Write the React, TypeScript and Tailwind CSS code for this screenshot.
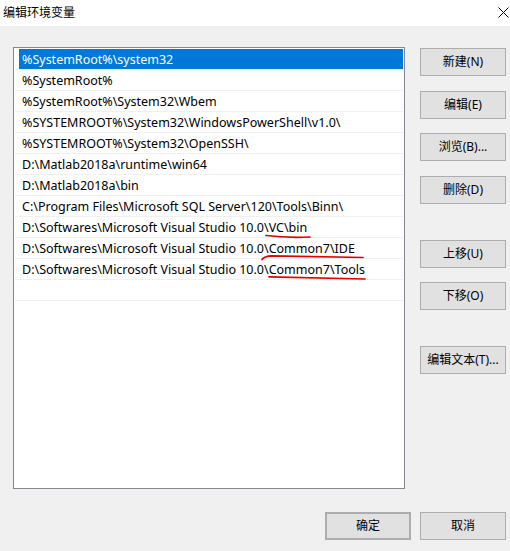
import React from 'react';

const paths = [
    '%SystemRoot%\\system32',
    '%SystemRoot%',
    '%SystemRoot%\\System32\\Wbem',
    '%SYSTEMROOT%\\System32\\WindowsPowerShell\\v1.0\\',
    '%SYSTEMROOT%\\System32\\OpenSSH\\',
    'D:\\Matlab2018a\\runtime\\win64',
    'D:\\Matlab2018a\\bin',
    'C:\\Program Files\\Microsoft SQL Server\\120\\Tools\\Binn\\',
    'D:\\Softwares\\Microsoft Visual Studio 10.0\\VC\\bin',
    'D:\\Softwares\\Microsoft Visual Studio 10.0\\Common7\\IDE',
    'D:\\Softwares\\Microsoft Visual Studio 10.0\\Common7\\Tools',
];

const font = { fontFamily: '"Noto Sans", "Noto Sans CJK SC", sans-serif' };

const Btn = ({ label, className = '' }: { label: string; className?: string }) => (
    <button className={`w-[86px] h-[28px] bg-[#e1e1e1] border border-[#adadad] text-[12px] text-black leading-none ${className}`}>
        {label}
    </button>
);

export default function App() {
    return (
        <div className="w-[510px] h-[551px] bg-[#f0f0f0] flex flex-col overflow-hidden" style={font}>
            {/* title bar */}
            <div className="h-[26px] bg-white flex items-center justify-between pl-[3px] pr-[1px] shrink-0">
                <span className="text-[12px] text-black">编辑环境变量</span>
                <svg width="11" height="11" viewBox="0 0 11 11" className="mt-[-1px]">
                    <path d="M0.5 0.5 L10.5 10.5 M10.5 0.5 L0.5 10.5" stroke="#000" strokeWidth="1" />
                </svg>
            </div>

            <div className="flex pl-[13px] pt-[21px]">
                {/* list */}
                <div className="relative w-[392px] h-[442px] bg-white border border-[#828790] pt-[1px]">
                    {paths.map((p, i) => (
                        <div key={p} className="ml-[1px] mr-[1px] border-b border-[#f0f0f0] h-[21px]">
                            <div
                                className={`ml-[4px] h-[20px] flex items-center pl-[3px] pt-[2px] text-[12.5px] whitespace-nowrap ${
                                    i === 0 ? 'bg-[#0078d7] text-white' : 'text-black'
                                }`}
                            >
                                {p}
                            </div>
                        </div>
                    ))}
                    <div className="ml-[1px] mr-[1px] border-b border-[#f0f0f0] h-[21px]" />
                    {/* red annotation strokes */}
                    <svg className="absolute left-[-14px] top-[-48px] pointer-events-none" width="510" height="551">
                        <path d="M266 235.5 Q286 238 310 237" stroke="#e00000" strokeWidth="1.7" fill="none" strokeLinecap="round" />
                        <path d="M262 259.5 Q264 256 272 255.8 L363 257.5" stroke="#e00000" strokeWidth="1.7" fill="none" strokeLinecap="round" />
                        <path d="M269 276.8 L365 279" stroke="#e00000" strokeWidth="1.7" fill="none" strokeLinecap="round" />
                    </svg>
                </div>

                {/* side buttons */}
                <div className="flex flex-col ml-[15px] pt-[1px]">
                    <Btn label="新建(N)" />
                    <Btn label="编辑(E)" className="mt-[15px]" />
                    <Btn label="浏览(B)..." className="mt-[14px]" />
                    <Btn label="删除(D)" className="mt-[15px]" />
                    <Btn label="上移(U)" className="mt-[36px]" />
                    <Btn label="下移(O)" className="mt-[14px]" />
                    <Btn label="编辑文本(T)..." className="mt-[36px]" />
                </div>
            </div>

            <div className="flex justify-end gap-[9px] pr-[4px] mt-[23px]">
                <Btn label="确定" className="border-2 border-[#0078d7]" />
                <Btn label="取消" />
            </div>
        </div>
    );
}
